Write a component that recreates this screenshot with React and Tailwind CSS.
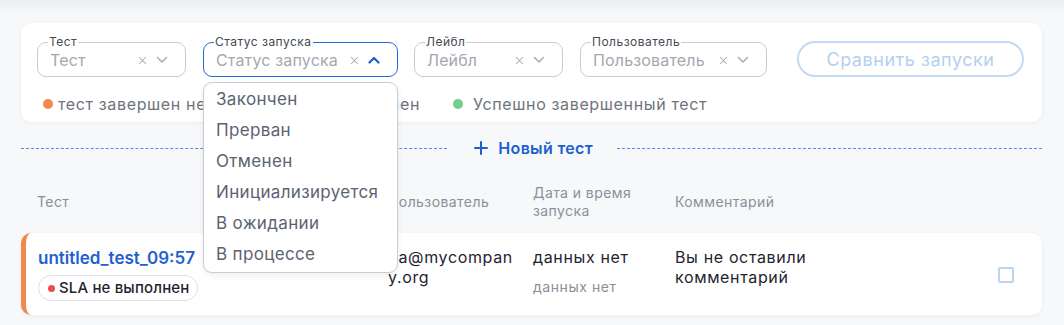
import React from "react";

const X = () => (
  <svg width="9" height="9" viewBox="0 0 10 10" className="shrink-0">
    <path d="M1.5 1.5 L8.5 8.5 M8.5 1.5 L1.5 8.5" stroke="#b4b9c0" strokeWidth="1.2" strokeLinecap="round" />
  </svg>
);

const ChevDown = () => (
  <svg width="12" height="8" viewBox="0 0 12 8" className="shrink-0">
    <path d="M1.5 1.5 L6 6 L10.5 1.5" stroke="#a9aeb6" strokeWidth="1.6" fill="none" strokeLinecap="round" strokeLinejoin="round" />
  </svg>
);

const ChevUp = () => (
  <svg width="12" height="8" viewBox="0 0 12 8" className="shrink-0">
    <path d="M1.5 6.5 L6 2 L10.5 6.5" stroke="#1a5fd0" strokeWidth="2.2" fill="none" strokeLinecap="round" strokeLinejoin="round" />
  </svg>
);

function Field({ label, width, active, children }) {
  return (
    <div className={`relative h-[35px] ${width} shrink-0`}>
      <div
        className={`h-full rounded-[9px] border flex items-center pl-3 pr-[17px] ${
          active ? "border-[#2468d8]" : "border-[#c9cdd3]"
        }`}
      >
        <span className="text-[16px] tracking-[0.01em] text-[#a3a8b0] leading-none whitespace-nowrap flex-1 mt-[2px]">
          {label}
        </span>
        <div className="flex items-center gap-[9px] mt-[2px]">
          <X />
          {active ? <ChevUp /> : <ChevDown />}
        </div>
      </div>
      <span className="absolute left-[11px] top-[-7px] bg-white px-[1px] text-[12px] tracking-[0.04em] leading-[14px] text-[#454a53] whitespace-nowrap">
        {label}
      </span>
      {children}
    </div>
  );
}

const items = ["Закончен", "Прерван", "Отменен", "Инициализируется", "В ожидании", "В процессе"];

export default function App() {
  return (
    <div className="w-[1064px] h-[325px] overflow-hidden bg-[#f7f8fa] bg-[linear-gradient(to_bottom,#eceef2_0px,#f7f8fa_14px)] font-['Inter',sans-serif] pt-[23px] pl-[21px] pr-[22px]">
      {/* Filter card */}
      <div className="relative z-10 bg-white rounded-[11px] shadow-[0_1px_4px_rgba(30,40,60,0.06)] h-[99px] pl-4 pr-[17px] pt-[18px]">
        <div className="flex items-center">
          <Field label="Тест" width="w-[149px]" />
          <div className="w-[17px]" />
          <Field label="Статус запуска" width="w-[195px]" active>
            <div className="absolute left-0 top-[40px] w-[195px] bg-white border border-[#c9cdd3] rounded-[9px] shadow-[0_2px_6px_rgba(30,40,60,0.08)] pt-[2px] pb-[1px] z-20">
              {items.map((t) => (
                <div
                  key={t}
                  className="h-[31px] flex items-center pl-[12px] text-[17px] tracking-[0.02em] text-[#5b6371] whitespace-nowrap"
                >
                  {t}
                </div>
              ))}
            </div>
          </Field>
          <div className="w-[16px]" />
          <Field label="Лейбл" width="w-[149px]" />
          <div className="w-[17px]" />
          <Field label="Пользователь" width="w-[187px]" />
          <div className="w-[30px]" />
          <button className="h-[36px] w-[227px] rounded-full border-2 border-[#c3d9f5] text-[18px] tracking-[0.03em] text-[#b4cff1] bg-white">
            Сравнить запуски
          </button>
        </div>
        <div className="flex items-center mt-[15px] text-[16px] tracking-[0.04em] text-[#6e747d] whitespace-nowrap">
          <div className="w-[383px] flex items-center justify-between pl-[6px]">
            <div className="flex items-center">
              <span className="w-[10px] h-[10px] rounded-full bg-[#f0884f] mr-[5px] shrink-0" />
              <span>тест завершен неуспешно</span>
            </div>
            <div className="flex items-center">
              <span className="w-[10px] h-[10px] rounded-full bg-[#a5abb3] mr-[5px] shrink-0" />
              <span>отменен</span>
            </div>
          </div>
          <div className="flex items-center pl-[33px]">
            <span className="w-[10px] h-[10px] rounded-full bg-[#6fcf8e] mr-[10px] shrink-0" />
            <span>Успешно завершенный тест</span>
          </div>
        </div>
      </div>

      {/* New test divider */}
      <div className="flex items-center h-[26px] mt-[13px]">
        <div className="flex-1 border-t border-dashed border-[#4f8fe6]" />
        <div className="flex items-center gap-[10px] pl-[27px] pr-[24px] text-[16px] tracking-[0.02em] font-semibold text-[#1d5fd0]">
          <svg width="14" height="14" viewBox="0 0 14 14">
            <path d="M7 1 V13 M1 7 H13" stroke="#1d5fd0" strokeWidth="2" strokeLinecap="round" />
          </svg>
          <span>Новый тест</span>
        </div>
        <div className="w-[425px] border-t border-dashed border-[#4f8fe6]" />
      </div>

      {/* Table header */}
      <div className="flex items-center h-[36px] mt-[23px] text-[14px] tracking-[0.03em] text-[#8a9099] leading-[18px]">
        <div className="w-[367px] pl-[16px]">Тест</div>
        <div className="w-[145px]">Пользователь</div>
        <div className="w-[142px]">
          Дата и время
          <br />
          запуска
        </div>
        <div>Комментарий</div>
      </div>

      {/* Row */}
      <div className="mt-[13px] h-[82px] bg-white rounded-[10px] border-l-[5px] border-[#f0884f] shadow-[0_1px_4px_rgba(30,40,60,0.06)] flex items-start pt-[14px]">
        <div className="w-[362px] pl-[12px]">
          <div className="text-[17px] font-semibold text-[#1f60d2] leading-[22px]">untitled_test_09:57</div>
          <div className="mt-[6px] inline-flex items-center h-[26px] pl-[9px] pr-[8px] gap-[4px] rounded-full border border-[#dde0e5] text-[15px] tracking-[0.01em] font-medium text-[#1f2430]">
            <span className="w-[7px] h-[7px] rounded-full bg-[#f04b4b]" />
            SLA не выполнен
          </div>
        </div>
        <div className="w-[145px] text-[16px] tracking-[0.04em] text-[#1f2430] leading-[20px] whitespace-nowrap">
          qa@mycompan
          <br />
          y.org
        </div>
        <div className="w-[142px]">
          <div className="text-[16px] tracking-[0.04em] text-[#1f2430] leading-[20px]">данных нет</div>
          <div className="text-[14px] tracking-[0.04em] text-[#8a9099] leading-[18px] mt-[11px]">данных нет</div>
        </div>
        <div className="w-[170px] text-[16px] tracking-[0.04em] text-[#1f2430] leading-[20px]">
          Вы не оставили комментарий
        </div>
        <div className="flex-1 flex justify-end pr-[28px] pt-[20px]">
          <div className="w-[16px] h-[16px] rounded-[2px] border-2 border-[#bcd4f2]" />
        </div>
      </div>
    </div>
  );
}
